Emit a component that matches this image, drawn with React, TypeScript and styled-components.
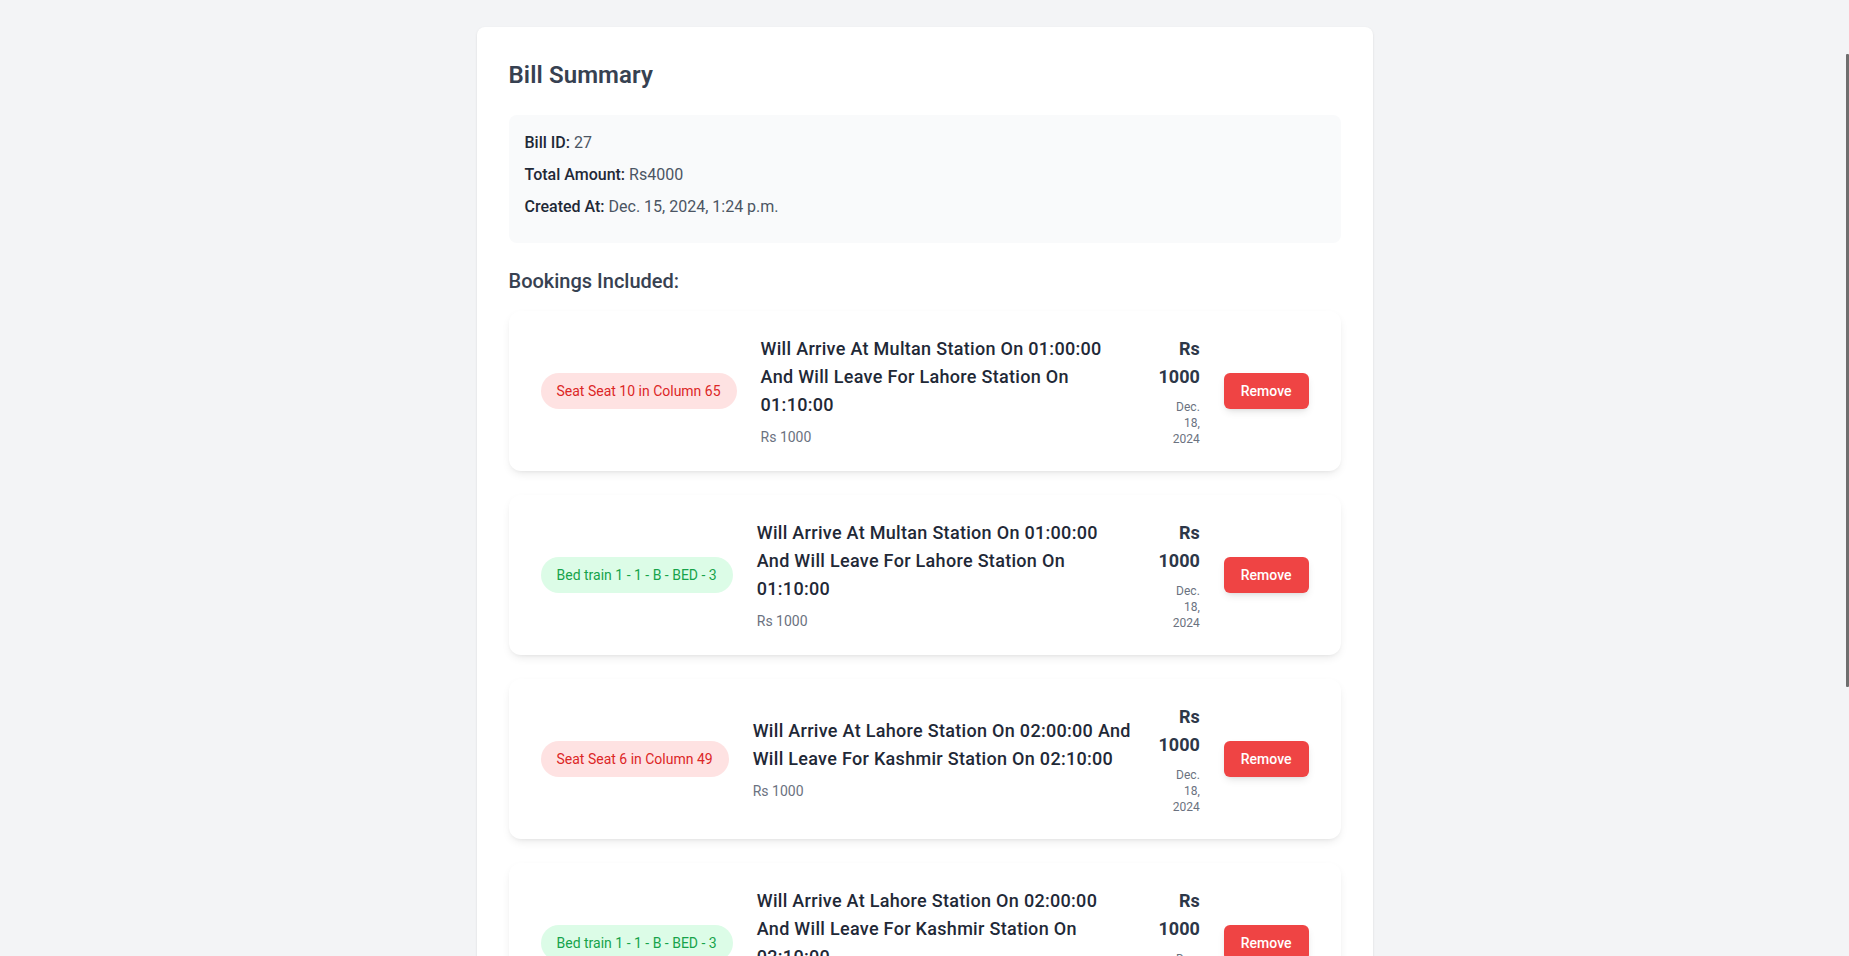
import React from "react";
import styled, { createGlobalStyle } from "styled-components";

const GlobalStyle = createGlobalStyle`
  html, body {
    margin: 0;
    padding: 0;
    background: #f3f4f6;
    overflow: hidden;
  }
  body {
    font-family: Roboto, "Noto Sans", Arial, sans-serif;
    color: #1f2937;
    -webkit-font-smoothing: antialiased;
  }
`;

const Page = styled.div`
  min-height: 100vh;
  padding-top: 27px;
  box-sizing: border-box;
`;

const Sheet = styled.main`
  max-width: 896px;
  margin: 0 auto;
  background: #ffffff;
  border-radius: 8px;
  box-shadow: 0 1px 3px rgba(0, 0, 0, 0.08), 0 1px 2px rgba(0, 0, 0, 0.04);
  padding: 32px;
  box-sizing: border-box;
`;

const Title = styled.h1`
  margin: 0 0 24px;
  font-size: 24px;
  line-height: 32px;
  font-weight: 600;
  color: #374151;
  letter-spacing: 0.1px;
`;

const InfoBox = styled.section`
  background: #f9fafb;
  border-radius: 8px;
  padding: 16px;
  margin-bottom: 24px;
`;

const InfoLine = styled.p`
  margin: 0 0 8px;
  font-size: 16px;
  line-height: 24px;
  color: #4b5563;
`;

const InfoLabel = styled.strong`
  font-weight: 500;
  color: #1f2937;
`;

const SectionTitle = styled.h2`
  margin: 0 0 16px;
  font-size: 20px;
  line-height: 28px;
  font-weight: 500;
  color: #374151;
`;

const BookingList = styled.div`
  display: flex;
  flex-direction: column;
  gap: 24px;
`;

const BookingCard = styled.article`
  display: flex;
  align-items: center;
  justify-content: space-between;
  gap: 24px;
  background: #ffffff;
  border-radius: 12px;
  padding: 24px 32px;
  box-shadow: 0 4px 10px -2px rgba(0, 0, 0, 0.1), 0 2px 4px -2px rgba(0, 0, 0, 0.06);
`;

const LeftGroup = styled.div`
  display: flex;
  align-items: center;
  gap: 24px;
  flex: 1;
  min-width: 0;
`;

const Pill = styled.span<{ $tone: "red" | "green" }>`
  flex-shrink: 0;
  white-space: nowrap;
  padding: 8px 16px;
  border-radius: 9999px;
  font-size: 14px;
  line-height: 20px;
  background: ${(p) => (p.$tone === "red" ? "#fee2e2" : "#dcfce7")};
  color: ${(p) => (p.$tone === "red" ? "#dc2626" : "#16a34a")};
`;

const Details = styled.div`
  flex: 1;
  min-width: 0;
`;

const RouteTitle = styled.h3`
  margin: 0;
  font-size: 18px;
  line-height: 28px;
  font-weight: 500;
  color: #1f2937;
  letter-spacing: 0.3px;
`;

const RouteLine = styled.span`
  display: block;
  white-space: nowrap;
`;

const SubPrice = styled.p`
  margin: 8px 0 0;
  font-size: 14px;
  line-height: 20px;
  color: #6b7280;
`;

const RightGroup = styled.div`
  display: flex;
  align-items: center;
  gap: 24px;
  flex-shrink: 0;
`;

const PriceCol = styled.div`
  width: min-content;
  text-align: right;
`;

const Amount = styled.div`
  font-size: 18px;
  line-height: 28px;
  font-weight: 700;
  color: #2d3748;
`;

const DateText = styled.div`
  margin-top: 8px;
  font-size: 12px;
  line-height: 16px;
  color: #6b7280;
`;

const RemoveButton = styled.button`
  font-family: inherit;
  border: none;
  cursor: pointer;
  background: #ef4444;
  color: #ffffff;
  font-size: 14px;
  line-height: 20px;
  font-weight: 500;
  padding: 8px 17px;
  border-radius: 6px;
  box-shadow: 0 4px 8px -2px rgba(0, 0, 0, 0.12), 0 2px 4px -2px rgba(0, 0, 0, 0.08);
`;

const ScrollThumb = styled.div`
  position: fixed;
  right: 0;
  top: 54px;
  width: 3px;
  height: 633px;
  background: #6e6e6e;
  border-radius: 1px;
`;

type Booking = {
  label: string;
  tone: "red" | "green";
  lines: string[];
};

const bookings: Booking[] = [
  {
    label: "Seat Seat 10 in Column 65",
    tone: "red",
    lines: [
      "Will Arrive At Multan Station On 01:00:00",
      "And Will Leave For Lahore Station On",
      "01:10:00",
    ],
  },
  {
    label: "Bed train 1 - 1 - B - BED - 3",
    tone: "green",
    lines: [
      "Will Arrive At Multan Station On 01:00:00",
      "And Will Leave For Lahore Station On",
      "01:10:00",
    ],
  },
  {
    label: "Seat Seat 6 in Column 49",
    tone: "red",
    lines: [
      "Will Arrive At Lahore Station On 02:00:00 And",
      "Will Leave For Kashmir Station On 02:10:00",
    ],
  },
  {
    label: "Bed train 1 - 1 - B - BED - 3",
    tone: "green",
    lines: [
      "Will Arrive At Lahore Station On 02:00:00",
      "And Will Leave For Kashmir Station On",
      "02:10:00",
    ],
  },
];

export default function App() {
  return (
    <Page>
      <GlobalStyle />
      <Sheet>
        <Title>Bill Summary</Title>
        <InfoBox>
          <InfoLine>
            <InfoLabel>Bill ID:</InfoLabel> 27
          </InfoLine>
          <InfoLine>
            <InfoLabel>Total Amount:</InfoLabel> Rs4000
          </InfoLine>
          <InfoLine>
            <InfoLabel>Created At:</InfoLabel> Dec. 15, 2024, 1:24 p.m.
          </InfoLine>
        </InfoBox>
        <SectionTitle>Bookings Included:</SectionTitle>
        <BookingList>
          {bookings.map((b, i) => (
            <BookingCard key={i}>
              <LeftGroup>
                <Pill $tone={b.tone}>{b.label}</Pill>
                <Details>
                  <RouteTitle>
                    {b.lines.map((l, j) => (
                      <RouteLine key={j}>{l}</RouteLine>
                    ))}
                  </RouteTitle>
                  <SubPrice>Rs 1000</SubPrice>
                </Details>
              </LeftGroup>
              <RightGroup>
                <PriceCol>
                  <Amount>Rs 1000</Amount>
                  <DateText>Dec. 18, 2024</DateText>
                </PriceCol>
                <RemoveButton>Remove</RemoveButton>
              </RightGroup>
            </BookingCard>
          ))}
        </BookingList>
      </Sheet>
      <ScrollThumb />
    </Page>
  );
}
